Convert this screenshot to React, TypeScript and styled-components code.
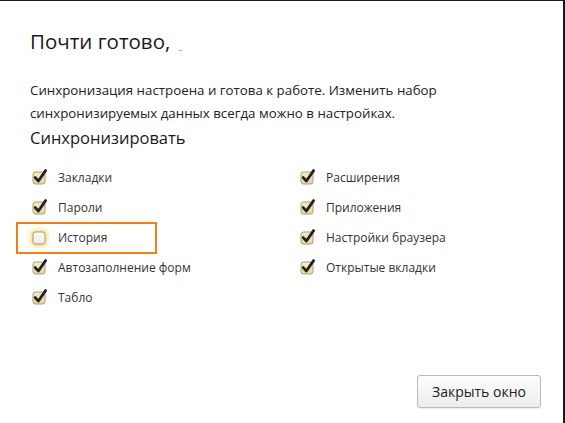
import React from "react";
import styled, { createGlobalStyle } from "styled-components";

const Global = createGlobalStyle`
  html, body { margin: 0; padding: 0; background: #fff; }
  body { font-family: "Open Sans", "Noto Sans", sans-serif; color: #222; }
`;

const Frame = styled.div`
  box-sizing: border-box;
  width: 565px;
  height: 423px;
  border-top: 1px solid #0f1b2b;
  border-right: 2px solid #0f1b2b;
  background: #fff;
  display: flex;
  flex-direction: column;
  padding: 26px 0 0 30px;
  position: relative;
`;

const Title = styled.h1`
  margin: 0;
  font-weight: 400;
  font-size: 20.5px;
  line-height: 28px;
  color: #1a1a1a;
  display: flex;
  align-items: flex-end;
`;

const Caret = styled.span`
  display: inline-block;
  width: 3px;
  height: 1px;
  background: #f08a8a;
  margin: 0 0 4px 9px;
`;

const Text = styled.p`
  margin: 24px 0 0;
  font-size: 13.3px;
  line-height: 23px;
  color: #222;
  width: 510px;
`;

const Section = styled.h2`
  margin: 0;
  font-weight: 400;
  font-size: 16.5px;
  line-height: 26px;
  color: #1a1a1a;
`;

const Columns = styled.div`
  display: grid;
  grid-template-columns: 268px 1fr;
  margin-top: 11px;
`;

const Column = styled.div`
  display: flex;
  flex-direction: column;
`;

const Row = styled.label`
  display: flex;
  align-items: center;
  height: 30px;
  gap: 10px;
  font-size: 12px;
  color: #333;
  position: relative;
`;

const Highlight = styled.span`
  position: absolute;
  left: -14px;
  top: 0;
  width: 137px;
  height: 28px;
  border: 2px solid #f57f17;
`;

const Box = styled.span`
  width: 16px;
  height: 16px;
  display: inline-flex;
  margin-left: 2px;
`;

const Footer = styled.div`
  margin-top: auto;
  display: flex;
  justify-content: flex-end;
  padding: 0 22px 15px 0;
`;

const Button = styled.button`
  font-family: "Open Sans", "Noto Sans", sans-serif;
  font-size: 14px;
  color: #222;
  height: 33px;
  width: 124px;
  border: 1px solid #b9b9b9;
  border-radius: 3px;
  background: linear-gradient(#fdfdfd, #ececec);
  box-shadow: 0 1px 1px rgba(0,0,0,0.08);
  padding: 0;
`;

const Check = ({ checked }: { checked: boolean }) => (
  <Box>
    <svg width="17" height="16" viewBox="0 0 17 16" style={{ overflow: "visible" }}>
      <defs>
        <linearGradient id={checked ? "gc" : "gu"} x1="0" y1="0" x2="0" y2="1">
          <stop offset="0" stopColor={checked ? "#f6edc6" : "#fafafa"} />
          <stop offset="1" stopColor={checked ? "#e6d698" : "#ececec"} />
        </linearGradient>
        <filter id="glow" x="-80%" y="-80%" width="260%" height="260%">
          <feGaussianBlur stdDeviation="2.5" />
        </filter>
      </defs>
      {!checked && (
        <rect x="-0.5" y="1.5" width="15" height="15" rx="3" fill="#ffcf33" filter="url(#glow)" />
      )}
      <rect x="1" y="3" width="12" height="12" rx="2.5" fill={`url(#${checked ? "gc" : "gu"})`} stroke={checked ? "#a59c7e" : "#9a9a9a"} strokeWidth="1" />
      {checked && (
        <path d="M3.2 8.6 L6.4 12 L13.6 1.6" fill="none" stroke="#222" strokeWidth="2.8" strokeLinecap="round" strokeLinejoin="round" />
      )}
    </svg>
  </Box>
);

const left = [
  { t: "Закладки", c: true },
  { t: "Пароли", c: true },
  { t: "История", c: false, h: true },
  { t: "Автозаполнение форм", c: true },
  { t: "Табло", c: true },
];
const right = [
  { t: "Расширения", c: true },
  { t: "Приложения", c: true },
  { t: "Настройки браузера", c: true },
  { t: "Открытые вкладки", c: true },
];

export default function App() {
  return (
    <>
      <Global />
      <Frame>
        <Title>Почти готово,<Caret /></Title>
        <Text>
          Синхронизация настроена и готова к работе. Изменить набор синхронизируемых данных всегда можно в настройках.
        </Text>
        <Section>Синхронизировать</Section>
        <Columns>
          <Column>
            {left.map((i) => (
              <Row key={i.t}>
                {i.h && <Highlight />}
                <Check checked={i.c} />
                {i.t}
              </Row>
            ))}
          </Column>
          <Column>
            {right.map((i) => (
              <Row key={i.t}>
                <Check checked={i.c} />
                {i.t}
              </Row>
            ))}
          </Column>
        </Columns>
        <Footer>
          <Button>Закрыть окно</Button>
        </Footer>
      </Frame>
    </>
  );
}
